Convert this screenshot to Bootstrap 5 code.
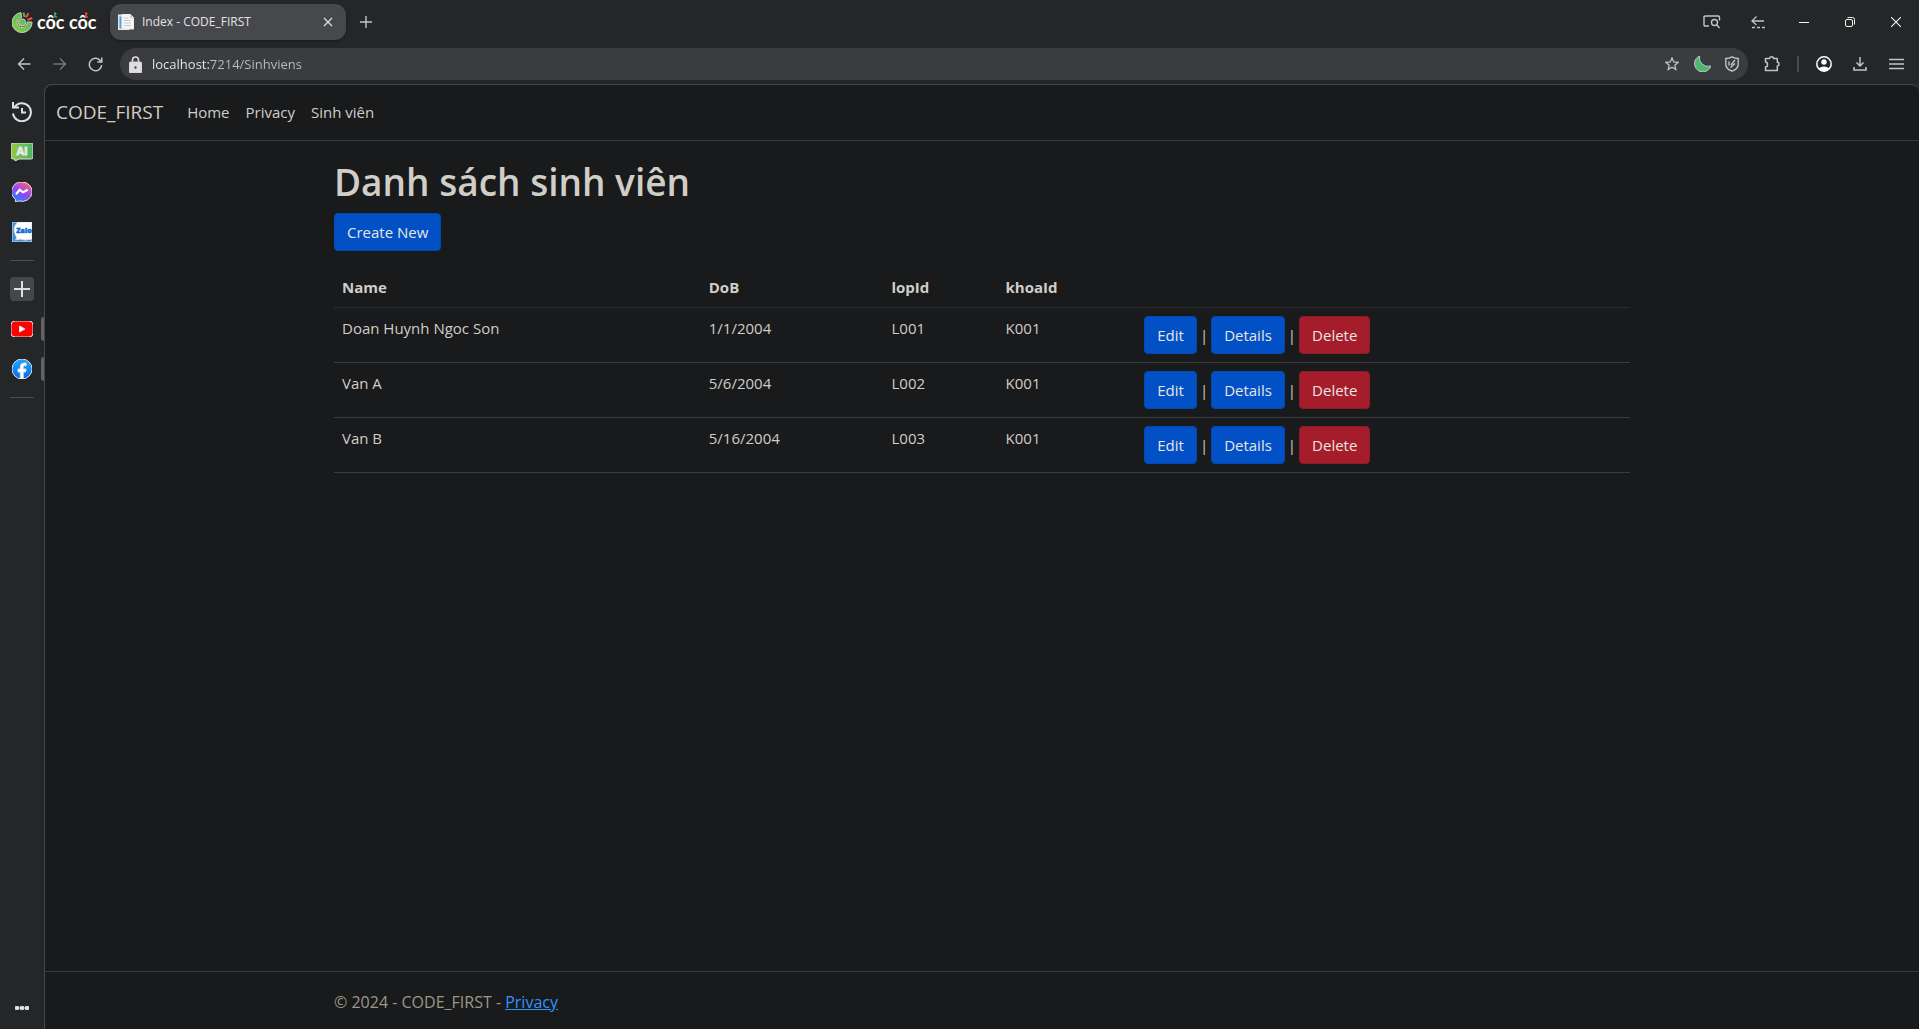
<!DOCTYPE html>
<html lang="vi">
<head>
<meta charset="utf-8">
<meta name="viewport" content="width=device-width, initial-scale=1">
<title>Index - CODE_FIRST</title>
<link href="https://cdn.jsdelivr.net/npm/bootstrap@5.3.0/dist/css/bootstrap.min.css" rel="stylesheet">
<style>
  :root { --chrome: #252628; --page: #191a1b; --line: #45474a; --rule: #393c3e; --ink: #d1cdc7; --icon: #c3c4c7; }
  body { background: var(--chrome); color: var(--ink); font-family: "Open Sans", "Noto Sans", sans-serif; font-size: 15px; line-height: 24px; }
  svg { display: block; flex: none; fill: none; stroke: currentColor; }
  .icon-btn { display: flex; align-items: center; justify-content: center; flex: none; padding: 0; border: 0; background: none; color: var(--icon); height: 32px; width: 36px; }

  /* title bar */
  .title-bar { height: 44px; }
  .brand-logo { width: 110px; padding-left: 12px; gap: 4px; }
  .brand-word { font: 700 18px/24px Lato, sans-serif; color: #fff; position: relative; white-space: nowrap; }
  .brand-tones { position: absolute; left: 0; top: 1px; }
  .browser-tab { width: 236px; height: 36px; border-radius: 11px; background: #47484c; padding: 0 6px 0 8px; box-shadow: 0 1px 3px #0005; font-size: 12px; color: #e3e3e5; gap: 8px; }
  .tab-close { width: 24px; height: 24px; color: #dcdcde; }
  .new-tab { width: 40px; }
  .window-btn { width: 46px; color: #f1f1f1; }
  .window-btn.dim { color: var(--icon); }

  /* toolbar */
  .tool-bar { height: 40px; padding: 0 5px 0 6px; }
  .address-bar { height: 32px; border-radius: 16px; background: #3b3c40; margin: 0 6px; padding: 0 1px 0 9px; }
  .address-bar .icon-btn { width: 30px; }
  .address-bar input { border: 0; outline: 0; padding: 0; margin-left: 10px; font-size: 13px; height: 24px; color: transparent; background: linear-gradient(90deg, #eeeeef 59px, #bdbec1 59px); -webkit-background-clip: text; background-clip: text; }
  .tool-sep { width: 2px; height: 16px; background: #4b4c50; margin: 0 7px; }

  /* side bar */
  .side-bar { width: 44px; padding: 8px 0 1px; }
  .side-bar .icon-btn { width: 44px; height: 40px; color: #dedfe1; position: relative; }
  .side-bar .open-mark::after { content: ""; position: absolute; right: 0; top: 8px; width: 3px; height: 24px; background: #626365; border-radius: 3px 0 0 3px; }
  .side-rule { width: 24px; height: 1px; background: #4b4c4f; margin: 8px auto; }
  .add-tile { width: 24px; height: 24px; border-radius: 4px; background: #464748; }

  /* page */
  .web-page { background: var(--page); border: solid var(--line); border-width: 1px 0 0 1px; border-radius: 8px 8px 0 0; overflow: hidden; }
  .site-nav { border-bottom: 1px solid var(--rule); padding: 7px 0 8px; }
  .site-nav .navbar-brand { font-size: 19px; line-height: 30px; padding: 5px 0; margin-right: 16px; color: var(--ink); }
  .site-nav .container-fluid { padding: 0 11px; }
  .site-nav .nav-link { color: var(--ink); }
  .page-title { font-size: 37px; line-height: 48px; font-weight: 600; padding-top: 1px; margin-bottom: 7px; }
  .btn { --bs-btn-font-size: 15px; line-height: 24px; --bs-btn-border-radius: 4px; }
  .btn-primary { --bs-btn-bg: #0250c5; --bs-btn-border-color: #0249b3; --bs-btn-color: #e8e6e3; }
  .btn-danger { --bs-btn-bg: #a51d2a; --bs-btn-border-color: #8e1b27; --bs-btn-color: #e8e6e3; }
  .student-list { --bs-table-bg: transparent; --bs-table-color: var(--ink); color: var(--ink); border-color: var(--rule); table-layout: fixed; margin-bottom: 16px; }
  .student-list thead { border-color: #2a2c2a; }
  .row-actions { gap: 3px; }
  .w-name { width: 28.3%; } .w-dob { width: 14.1%; } .w-lop { width: 8.8%; } .w-khoa { width: 10.7%; }
  .site-footer { border-top: 1px solid var(--rule); padding: 18px 0 15px; color: #9e9689; font-size: 16px; }
  .site-footer a { color: #3391ff; }
</style>
<script src="https://cdn.jsdelivr.net/npm/bootstrap@5.3.0/dist/js/bootstrap.bundle.min.js"></script>
</head>
<body class="d-flex flex-column vh-100 overflow-hidden">

<header class="title-bar d-flex align-items-center">
  <div class="brand-logo d-flex align-items-center">
    <svg width="21" height="21" viewBox="0 0 21 21" stroke="none">
      <defs><linearGradient id="g1" x1="0" y1="1" x2="1" y2="0"><stop offset="0" stop-color="#8fcb3c"/><stop offset="1" stop-color="#45b968"/></linearGradient></defs>
      <path d="M9 .6A10 10 0 1 0 20 10H15A5 5 0 1 1 9.500 5.600Z" fill="url(#g1)"/>
      <circle cx="10" cy="10.500" r="3.700" fill="url(#g1)"/>
      <path d="M11.500 .5l1 4.500" stroke="#4fb965" stroke-width="2"/>
      <path d="M16.500 1.200L13.800 5.600M20.300 6L15.500 8" stroke="#f0523c" stroke-width="2"/>
    </svg>
    <span class="brand-word">côc côc
      <svg class="brand-tones" width="60" height="12" viewBox="0 0 60 12" stroke-width="1.500"><path d="M17 2q3 0 1 2t2 2" stroke="#3fb566"/><path d="M48 2q3 0 1 2t2 2" stroke="#f0523c"/></svg>
    </span>
  </div>
  <div class="browser-tab d-flex align-items-center">
    <svg width="16" height="16" viewBox="0 0 16 16" stroke="none"><path d="M0 1h11v15H0z" fill="#e9edf0"/><path d="M1 2h3v13H1z" fill="#4a9fe0"/><path d="M4 0h8l4 4v11H4z" fill="#f6f7f8"/><path d="M12 0v4h4z" fill="#b7bdc3"/><path d="M6 4h4M6 6.500h7M6 9h7M6 11.500h7" stroke="#c5cacf"/></svg>
    <span class="flex-grow-1 text-truncate">Index - CODE_FIRST</span>
    <button class="icon-btn tab-close" aria-label="Close tab"><svg width="10" height="10" viewBox="0 0 10 10" stroke-width="1.300"><path d="M1 1l8 8M9 1L1 9"/></svg></button>
  </div>
  <button class="icon-btn new-tab" aria-label="New tab"><svg width="12" height="12" viewBox="0 0 12 12" stroke-width="1.400"><path d="M6 0v12M0 6h12"/></svg></button>
  <div class="d-flex ms-auto">
    <button class="icon-btn window-btn dim" aria-label="Search tabs"><svg width="18" height="14" viewBox="0 0 18 14" stroke-width="1.400"><path d="M6 11H2.200Q1 11 1 9.800V2.200Q1 1 2.200 1H15.300Q16.500 1 16.500 2.200V5.500"/><circle cx="11.500" cy="7.500" r="3"/><path d="M13.700 9.700L16.500 13"/></svg></button>
    <button class="icon-btn window-btn dim" aria-label="Back to previous"><svg width="14" height="14" viewBox="0 0 14 14" stroke-width="1.300"><path d="M13 6H1.500M5.500 1.500L1 6l4.500 4"/><path d="M1 12.500h13" stroke-dasharray="3 2"/></svg></button>
    <button class="icon-btn window-btn" aria-label="Minimize"><svg width="10" height="10" viewBox="0 0 10 10"><path d="M0 5.500h10"/></svg></button>
    <button class="icon-btn window-btn" aria-label="Restore"><svg width="10" height="10" viewBox="0 0 10 10"><rect x=".5" y="2.500" width="7" height="7" rx="1.500"/><path d="M2.500.5H7.500q2 0 2 2V7.500"/></svg></button>
    <button class="icon-btn window-btn" aria-label="Close window"><svg width="10" height="10" viewBox="0 0 10 10" stroke-width="1.100"><path d="M0 0l10 10M10 0L0 10"/></svg></button>
  </div>
</header>

<div class="tool-bar d-flex align-items-center">
  <button class="icon-btn" aria-label="Back"><svg width="14" height="12" viewBox="0 0 14 12" stroke-width="1.400"><path d="M13.500 6H1.500M7 .5L1.500 6 7 11.500"/></svg></button>
  <button class="icon-btn opacity-50" aria-label="Forward"><svg width="14" height="12" viewBox="0 0 14 12" stroke-width="1.400"><path d="M.5 6H12.500M7 .5L12.500 6 7 11.500"/></svg></button>
  <button class="icon-btn" aria-label="Reload"><svg width="16" height="15" viewBox="0 0 16 15" stroke-width="1.500"><path d="M13.700 8.200a6.200 6.200 0 1 1-1.700-5L13.500 4.800M13.800.5V5H9.300"/></svg></button>
  <div class="address-bar d-flex align-items-center flex-grow-1">
    <svg width="13" height="17" viewBox="0 0 13 17" stroke="none"><path d="M3.500 7V4a3 3 0 0 1 6 0V7" fill="none" stroke="#e0e0e2" stroke-width="1.600"/><rect y="6" width="13" height="11" rx="1.500" fill="#e0e0e2"/><circle cx="6.500" cy="11.500" r="1.500" fill="#3b3c40"/></svg>
    <input class="flex-grow-1" type="text" value="localhost:7214/Sinhviens" aria-label="Address" spellcheck="false">
    <button class="icon-btn" aria-label="Bookmark"><svg width="14" height="14" viewBox="0 0 14 14" stroke-width="1.300"><path d="M7 1l1.800 4 4.200.4-3.200 2.800 1 4.300L7 10.200l-3.800 2.300 1-4.300L1 5.400 5.200 5z"/></svg></button>
    <button class="icon-btn" aria-label="Dark mode"><svg width="17" height="16" viewBox="0 0 17 16" stroke="none"><path d="M5.500 0A8.300 8.300 0 1 0 16.800 10Q11.500 11.500 8 8T5.500 0Z" fill="#4cb96a"/></svg></button>
    <button class="icon-btn" aria-label="Ad block"><svg width="14" height="16" viewBox="0 0 14 16" stroke-width="1.400"><path d="M7 .8Q10 2.500 13.200 2.500V8q0 5-6.200 7.200Q.8 13 .8 8V2.500Q4 2.500 7 .8z"/><path d="M4 5.500v4M6 9l4-5M5.500 11.500l4.500-4"/></svg></button>
  </div>
  <button class="icon-btn" aria-label="Extensions"><svg width="16" height="16" viewBox="0 0 16 16" stroke-width="1.500"><path d="M1.500 2.500H5.500a2 1.700 0 0 1 4 0h3.800V6.200a1.700 1.900 0 0 1 0 3.800v4.500H1.500V11a2 2.500 0 0 0 0-5z" stroke-linejoin="round"/></svg></button>
  <div class="tool-sep"></div>
  <button class="icon-btn" aria-label="Profile"><svg width="16" height="16" viewBox="0 0 16 16"><circle cx="8" cy="8" r="7.200" stroke="#fff" stroke-width="1.500"/><circle cx="8" cy="6" r="2.700" fill="#fff" stroke="none"/><path d="M2.500 12.500Q8 8.500 13.500 12.500Q8 18 2.500 12.500z" fill="#fff" stroke="none"/></svg></button>
  <button class="icon-btn" aria-label="Downloads"><svg width="14" height="14" viewBox="0 0 14 14" stroke-width="1.500"><path d="M7 0v9M3.500 5.500L7 9l3.500-3.500M1 10v3h12v-3"/></svg></button>
  <button class="icon-btn" aria-label="Menu"><svg width="15" height="12" viewBox="0 0 15 12" stroke-width="1.400"><path d="M0 1.500h15M0 6h15M0 10.500h15"/></svg></button>
</div>

<div class="d-flex flex-grow-1 overflow-hidden">
  <aside class="side-bar d-flex flex-column flex-shrink-0">
    <button class="icon-btn" aria-label="History"><svg width="22" height="20" viewBox="0 0 22 20" stroke-width="2"><path d="M3.500 5A9 9 0 1 1 2 11.500M2 0v5.500h6M11 6v4.500h4"/></svg></button>
    <button class="icon-btn" aria-label="AI chat"><svg width="22" height="18" viewBox="0 0 22 18" stroke="none"><defs><linearGradient id="g2"><stop stop-color="#94c83d"/><stop offset="1" stop-color="#45b56b"/></linearGradient></defs><path d="M2 0H20q2 0 2 2V14q0 2-2 2H8l-4 2V16H2q-2 0-2-2V2q0-2 2-2z" fill="url(#g2)"/><text x="11" y="12" text-anchor="middle" font-family="Open Sans, sans-serif" font-size="11" font-weight="700" fill="#fff">AI</text></svg></button>
    <button class="icon-btn" aria-label="Messenger"><svg width="20" height="20" viewBox="0 0 20 20" stroke="none"><defs><linearGradient id="g3" x1=".2" y1="1" x2=".8" y2="0"><stop stop-color="#1288ff"/><stop offset=".5" stop-color="#9a43f5"/><stop offset="1" stop-color="#ff6470"/></linearGradient></defs><path d="M10 0a10 9.700 0 1 1-3 18.900L3.500 20 3.300 17.200A9.700 9.700 0 0 1 10 0z" fill="url(#g3)"/><path d="M4 12.300l3.700-4.500 3.300 2.500 4.800-2.600" fill="none" stroke="#fff" stroke-width="2.200"/></svg></button>
    <button class="icon-btn" aria-label="Zalo"><svg width="20" height="20" viewBox="0 0 20 20" stroke="none"><rect width="20" height="20" rx="1" fill="#3c8fdc"/><path d="M6 0H20V17Q13 19 8 17L3.500 18Q5 17 4.500 15Q-1 6 6 0z" fill="#fff"/><text x="12" y="11" text-anchor="middle" font-family="Open Sans, sans-serif" font-size="7" font-weight="800" fill="#0a66cc" stroke="#0a66cc" stroke-width=".4">Zalo</text></svg></button>
    <div class="side-rule"></div>
    <button class="icon-btn" aria-label="Add"><span class="add-tile d-flex align-items-center justify-content-center"><svg width="16" height="16" viewBox="0 0 16 16" stroke-width="2"><path d="M8 0v16M0 8h16"/></svg></span></button>
    <button class="icon-btn open-mark" aria-label="YouTube"><svg width="22" height="16" viewBox="0 0 22 16" stroke="none"><rect width="22" height="16" rx="4" fill="#f00"/><path d="M8.500 5v6l5.500-3z" fill="#fff"/></svg></button>
    <button class="icon-btn open-mark" aria-label="Facebook"><svg width="20" height="20" viewBox="0 0 20 20" stroke="none"><defs><linearGradient id="g4" x2="0" y2="1"><stop stop-color="#19acfc"/><stop offset="1" stop-color="#0866e8"/></linearGradient></defs><circle cx="10" cy="10" r="10" fill="url(#g4)"/><path d="M8.300 20V13H6V10h2.300V8q0-4 3.700-4h2.200v2.700h-1.500q-1.500 0-1.500 1.500V10h2.900l-.5 3h-2.400v7z" fill="#fff"/></svg></button>
    <div class="side-rule"></div>
    <button class="icon-btn mt-auto" aria-label="More"><svg width="14" height="4" viewBox="0 0 14 4" stroke="none"><circle cx="2" cy="2" r="2" fill="#e6e6e8"/><circle cx="7" cy="2" r="2" fill="#e6e6e8"/><circle cx="12" cy="2" r="2" fill="#e6e6e8"/></svg></button>
  </aside>

  <div class="web-page d-flex flex-column flex-grow-1">
    <nav class="site-nav navbar navbar-expand mb-3">
      <div class="container-fluid">
        <a class="navbar-brand" href="#">CODE_FIRST</a>
        <ul class="navbar-nav me-auto">
          <li class="nav-item"><a class="nav-link" href="#">Home</a></li>
          <li class="nav-item"><a class="nav-link" href="#">Privacy</a></li>
          <li class="nav-item"><a class="nav-link" href="#">Sinh viên</a></li>
        </ul>
      </div>
    </nav>
    <main class="container flex-grow-1">
      <h1 class="page-title">Danh sách sinh viên</h1>
      <p class="mb-3"><a class="btn btn-primary" href="#">Create New</a></p>
      <table class="table student-list">
        <thead>
          <tr><th class="w-name">Name</th><th class="w-dob">DoB</th><th class="w-lop">lopId</th><th class="w-khoa">khoaId</th><th></th></tr>
        </thead>
        <tbody>
          <tr><td>Doan Huynh Ngoc Son</td><td>1/1/2004</td><td>L001</td><td>K001</td>
            <td><div class="row-actions d-flex align-items-center"><a class="btn btn-primary" href="#">Edit</a> | <a class="btn btn-primary" href="#">Details</a> | <a class="btn btn-danger" href="#">Delete</a></div></td></tr>
          <tr><td>Van A</td><td>5/6/2004</td><td>L002</td><td>K001</td>
            <td><div class="row-actions d-flex align-items-center"><a class="btn btn-primary" href="#">Edit</a> | <a class="btn btn-primary" href="#">Details</a> | <a class="btn btn-danger" href="#">Delete</a></div></td></tr>
          <tr><td>Van B</td><td>5/16/2004</td><td>L003</td><td>K001</td>
            <td><div class="row-actions d-flex align-items-center"><a class="btn btn-primary" href="#">Edit</a> | <a class="btn btn-primary" href="#">Details</a> | <a class="btn btn-danger" href="#">Delete</a></div></td></tr>
        </tbody>
      </table>
    </main>
    <footer class="site-footer">
      <div class="container">© 2024 - CODE_FIRST - <a href="#">Privacy</a></div>
    </footer>
  </div>
</div>
</body>
</html>
